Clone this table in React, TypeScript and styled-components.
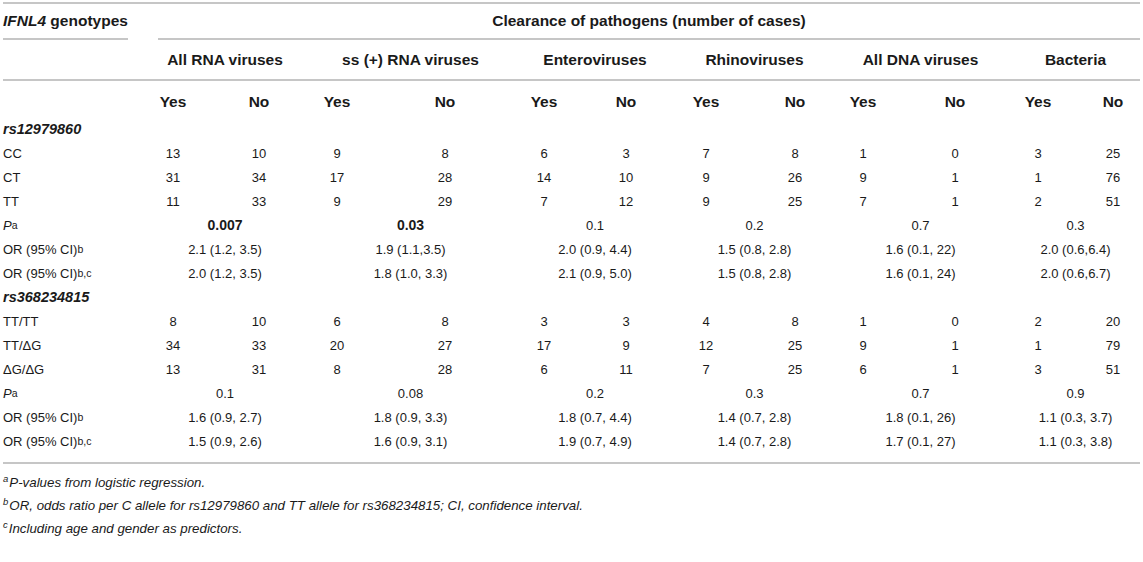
import { Fragment } from 'react';
import styled, { createGlobalStyle } from 'styled-components';

// column tracks: label, then per group [yes, gap, no, gap]
const TRACKS = [143, 60, 26, 60, 18, 60, 48, 60, 39, 60, 22, 60, 20, 60, 29, 60, 8, 60, 32, 60, 23, 60, 15, 60, 0];
const COLS = TRACKS.map((t) => `${t}px`).join(' ');

const yesCol = (g: number) => 2 + 4 * g;
const noCol = (g: number) => 4 + 4 * g;
const spanCol = (g: number) => `${2 + 4 * g} / ${6 + 4 * g}`;

const GROUPS = ['All RNA viruses', 'ss (+) RNA viruses', 'Enteroviruses', 'Rhinoviruses', 'All DNA viruses', 'Bacteria'];

type CountRow = { label: string; values: number[] };
type MergedRow = { label: 'P' | 'ORb' | 'ORbc'; values: string[]; bold?: boolean[] };

type Section = {
  name: string;
  counts: CountRow[];
  merged: MergedRow[];
};

const SECTIONS: Section[] = [
  {
    name: 'rs12979860',
    counts: [
      { label: 'CC', values: [13, 10, 9, 8, 6, 3, 7, 8, 1, 0, 3, 25] },
      { label: 'CT', values: [31, 34, 17, 28, 14, 10, 9, 26, 9, 1, 1, 76] },
      { label: 'TT', values: [11, 33, 9, 29, 7, 12, 9, 25, 7, 1, 2, 51] },
    ],
    merged: [
      { label: 'P', values: ['0.007', '0.03', '0.1', '0.2', '0.7', '0.3'], bold: [true, true] },
      { label: 'ORb', values: ['2.1 (1.2, 3.5)', '1.9 (1.1,3.5)', '2.0 (0.9, 4.4)', '1.5 (0.8, 2.8)', '1.6 (0.1, 22)', '2.0 (0.6,6.4)'] },
      { label: 'ORbc', values: ['2.0 (1.2, 3.5)', '1.8 (1.0, 3.3)', '2.1 (0.9, 5.0)', '1.5 (0.8, 2.8)', '1.6 (0.1, 24)', '2.0 (0.6,6.7)'] },
    ],
  },
  {
    name: 'rs368234815',
    counts: [
      { label: 'TT/TT', values: [8, 10, 6, 8, 3, 3, 4, 8, 1, 0, 2, 20] },
      { label: 'TT/ΔG', values: [34, 33, 20, 27, 17, 9, 12, 25, 9, 1, 1, 79] },
      { label: 'ΔG/ΔG', values: [13, 31, 8, 28, 6, 11, 7, 25, 6, 1, 3, 51] },
    ],
    merged: [
      { label: 'P', values: ['0.1', '0.08', '0.2', '0.3', '0.7', '0.9'] },
      { label: 'ORb', values: ['1.6 (0.9, 2.7)', '1.8 (0.9, 3.3)', '1.8 (0.7, 4.4)', '1.4 (0.7, 2.8)', '1.8 (0.1, 26)', '1.1 (0.3, 3.7)'] },
      { label: 'ORbc', values: ['1.5 (0.9, 2.6)', '1.6 (0.9, 3.1)', '1.9 (0.7, 4.9)', '1.4 (0.7, 2.8)', '1.7 (0.1, 27)', '1.1 (0.3, 3.8)'] },
    ],
  },
];

function RowLabelText({ label }: { label: string }) {
  if (label === 'P') {
    return (
      <>
        <em>P</em>
        <Sup>a</Sup>
      </>
    );
  }
  if (label === 'ORb' || label === 'ORbc') {
    return (
      <>
        OR (95% CI)<Sup>{label === 'ORb' ? 'b' : 'b,c'}</Sup>
      </>
    );
  }
  return <>{label}</>;
}

function App() {
  return (
    <Page>
      <GlobalStyle />
      <Rule />
      <Row $height={36}>
        <TopHead $col="1" $left={3} $right={15} $align="left">
          <em>IFNL4</em>&nbsp;genotypes
        </TopHead>
        <TopHead $col="2 / -1" $left={15} $right={3} $align="center">
          Clearance of pathogens (number of cases)
        </TopHead>
      </Row>
      <Row $height={39}>
        {GROUPS.map((g, i) => (
          <GroupHead key={g} $col={spanCol(i)}>
            {g}
          </GroupHead>
        ))}
      </Row>
      <Rule />
      <SubHeadRow $height={36}>
        {GROUPS.map((g, i) => (
          <Fragment key={g}>
            <HeadCell $col={`${yesCol(i)}`}>Yes</HeadCell>
            <HeadCell $col={`${noCol(i)}`}>No</HeadCell>
          </Fragment>
        ))}
      </SubHeadRow>

      {SECTIONS.map((s) => (
        <Section key={s.name}>
          <Row $height={24}>
            <SectionLabel>{s.name}</SectionLabel>
          </Row>
          {s.counts.map((r) => (
            <Row key={r.label} $height={24}>
              <RowLabel>{r.label}</RowLabel>
              {r.values.map((v, i) => (
                <Cell key={i} $col={`${i % 2 === 0 ? yesCol(i / 2) : noCol((i - 1) / 2)}`}>
                  {v}
                </Cell>
              ))}
            </Row>
          ))}
          {s.merged.map((r) => (
            <Row key={r.label} $height={24}>
              <RowLabel>
                <RowLabelText label={r.label} />
              </RowLabel>
              {r.values.map((v, i) => (
                <Cell key={i} $col={spanCol(i)} $bold={!!r.bold?.[i]}>
                  {v}
                </Cell>
              ))}
            </Row>
          ))}
        </Section>
      ))}

      <BottomRule />
      <Notes>
        <Note>
          <NoteMark>a</NoteMark>P-values from logistic regression.
        </Note>
        <Note>
          <NoteMark>b</NoteMark>OR, odds ratio per C allele for rs12979860 and TT allele for rs368234815; CI, confidence
          interval.
        </Note>
        <Note>
          <NoteMark>c</NoteMark>Including age and gender as predictors.
        </Note>
      </Notes>
    </Page>
  );
}

const GlobalStyle = createGlobalStyle`
  html, body {
    margin: 0;
    padding: 0;
    background: #ffffff;
  }
  body {
    font-family: "Liberation Sans", Arial, sans-serif;
    color: #1a1a1a;
  }
`;

const Page = styled.div`
  width: 1143px;
  height: 562px;
  padding-top: 2px;
  box-sizing: border-box;
  overflow: hidden;
`;

const Rule = styled.div`
  height: 2px;
  margin: 0 3px;
  background: #c6c6c6;
`;

const BottomRule = styled(Rule)`
  margin-top: 9px;
`;

const Row = styled.div<{ $height: number }>`
  display: grid;
  grid-template-columns: ${COLS};
  height: ${({ $height }) => $height}px;
`;

const SubHeadRow = styled(Row)`
  padding-top: 6px;
  box-sizing: border-box;
`;

const Section = styled.div`
  display: flex;
  flex-direction: column;
`;

const TopHead = styled.div<{ $col: string; $left: number; $right: number; $align: 'left' | 'center' }>`
  grid-column: ${({ $col }) => $col};
  margin: 0 ${({ $right }) => $right}px 0 ${({ $left }) => $left}px;
  border-bottom: 2px solid #c6c6c6;
  display: flex;
  align-items: center;
  justify-content: ${({ $align }) => ($align === 'left' ? 'flex-start' : 'center')};
  font-size: 15.5px;
  font-weight: bold;
  white-space: nowrap;
`;

const GroupHead = styled.div<{ $col: string }>`
  grid-column: ${({ $col }) => $col};
  display: flex;
  align-items: center;
  justify-content: center;
  font-size: 15.5px;
  font-weight: bold;
  white-space: nowrap;
`;

const Cell = styled.div<{ $col: string; $bold?: boolean }>`
  grid-column: ${({ $col }) => $col};
  min-width: 0;
  display: flex;
  align-items: center;
  justify-content: center;
  white-space: nowrap;
  font-size: ${({ $bold }) => ($bold ? 14 : 13)}px;
  font-weight: ${({ $bold }) => ($bold ? 'bold' : 'normal')};
`;

const HeadCell = styled(Cell)`
  font-size: 15.5px;
  font-weight: bold;
`;

const RowLabel = styled.div`
  grid-column: 1;
  display: flex;
  align-items: center;
  padding-left: 3px;
  font-size: 13px;
  white-space: nowrap;
`;

const SectionLabel = styled(RowLabel)`
  grid-column: 1 / -1;
  font-weight: bold;
  font-style: italic;
  font-size: 14.5px;
`;

const Sup = styled.sup`
  font-size: 10.5px;
  line-height: 0;
  vertical-align: 5px;
`;

const Notes = styled.div`
  margin-top: 7px;
  padding-left: 3px;
`;

const Note = styled.div`
  font-size: 13.3px;
  font-style: italic;
  line-height: 23px;
  white-space: nowrap;
`;

const NoteMark = styled.sup`
  font-size: 9.5px;
  line-height: 0;
  vertical-align: 5px;
  margin-right: 1px;
`;

export default App;
